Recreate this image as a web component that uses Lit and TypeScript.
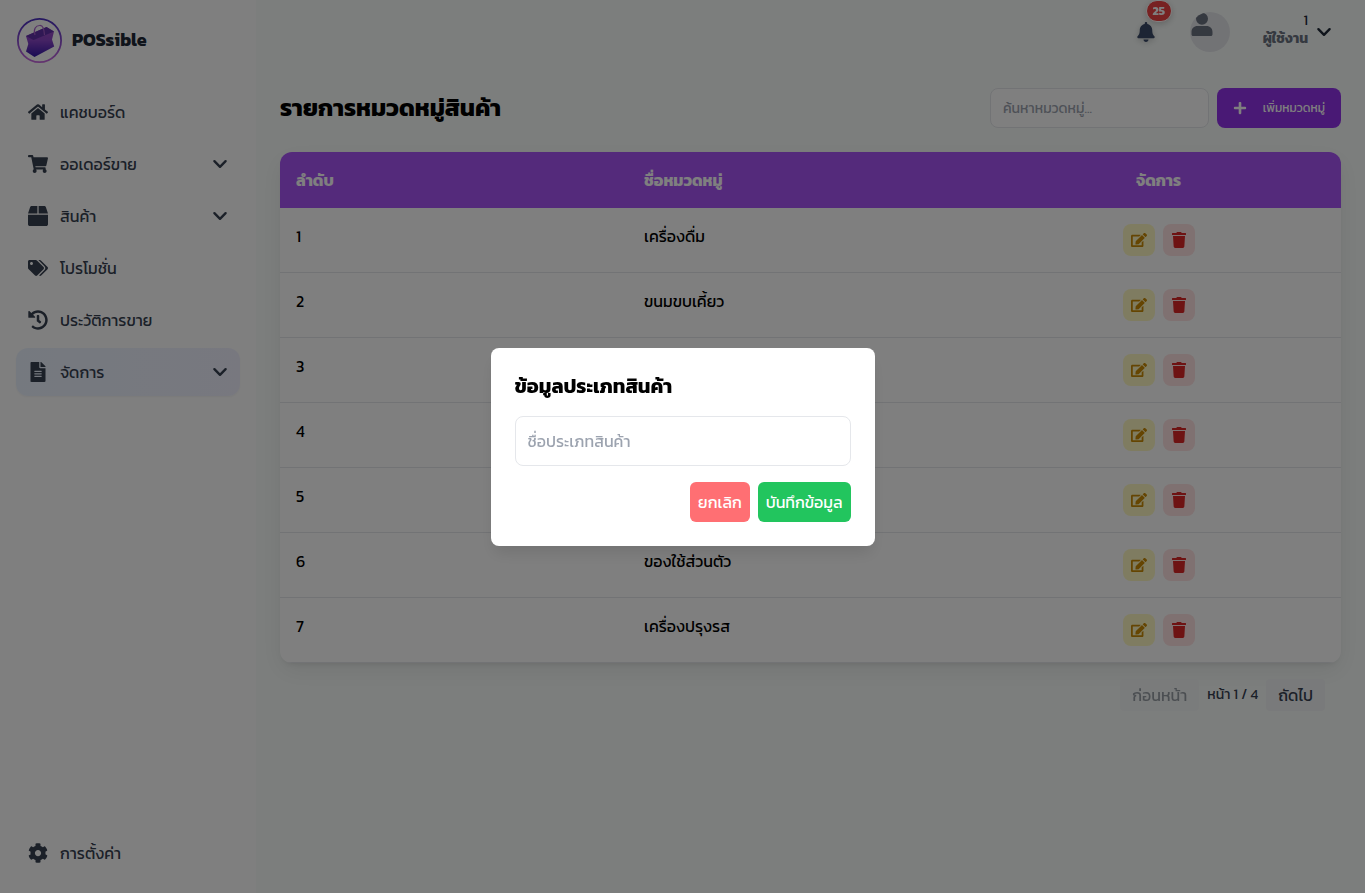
import { LitElement, html, css, svg } from "lit";
import { customElement, property } from "lit/decorators.js";

interface Glyph {
  box: string;
  d: string;
}

const glyphs: Record<string, Glyph> = {
  home: {
    box: "0 0 576 512",
    d: "M280.37 148.26L96 300.11V464a16 16 0 0 0 16 16l112.06-.29a16 16 0 0 0 15.92-16V368a16 16 0 0 1 16-16h64a16 16 0 0 1 16 16v95.64a16 16 0 0 0 16 16.05L464 480a16 16 0 0 0 16-16V300L295.67 148.26a12.19 12.19 0 0 0-15.3 0zM571.6 251.47L488 182.56V44.05a12 12 0 0 0-12-12h-56a12 12 0 0 0-12 12v72.61L318.47 43a48 48 0 0 0-61 0L4.34 251.47a12 12 0 0 0-1.6 16.9l25.5 31A12 12 0 0 0 45.15 301l235.22-193.74a12.19 12.19 0 0 1 15.3 0L530.9 301a12 12 0 0 0 16.9-1.6l25.5-31a12 12 0 0 0-1.7-16.93z",
  },
  cart: {
    box: "0 0 576 512",
    d: "M528.12 301.319l47.273-208C578.806 78.301 567.391 64 551.99 64H159.208l-9.166-44.81C147.758 8.021 137.93 0 126.529 0H24C10.745 0 0 10.745 0 24v16c0 13.255 10.745 24 24 24h69.883l70.248 343.435C147.325 417.1 136 435.222 136 456c0 30.928 25.072 56 56 56s56-25.072 56-56c0-15.674-6.447-29.835-16.824-40h209.647C430.447 426.165 424 440.326 424 456c0 30.928 25.072 56 56 56s56-25.072 56-56c0-22.172-12.888-41.332-31.579-50.405l5.517-24.276c3.413-15.018-8.002-29.319-23.403-29.319H218.117l-6.545-32h293.145c11.206 0 20.92-7.754 23.403-18.681z",
  },
  box: {
    box: "0 0 512 512",
    d: "M509.5 184.6L458.9 32.8C452.4 13.2 434.1 0 413.4 0H272v192h238.7c-.4-2.5-.4-5-1.2-7.4zM240 0H98.6c-20.7 0-39 13.2-45.5 32.8L2.5 184.6c-.8 2.4-.8 4.9-1.2 7.4H240V0zM0 224v240c0 26.5 21.5 48 48 48h416c26.5 0 48-21.5 48-48V224H0z",
  },
  tags: {
    box: "0 0 640 512",
    d: "M497.941 225.941L286.059 14.059A48 48 0 0 0 252.118 0H48C21.49 0 0 21.49 0 48v204.118a48 48 0 0 0 14.059 33.941l211.882 211.882c18.744 18.745 49.136 18.746 67.882 0l204.118-204.118c18.745-18.745 18.745-49.137 0-67.882zM112 160c-26.51 0-48-21.49-48-48s21.49-48 48-48 48 21.49 48 48-21.49 48-48 48zm513.941 133.823L421.823 497.941c-18.745 18.745-49.137 18.745-67.882 0l-.36-.36L527.64 323.522c16.999-16.999 26.362-39.6 26.362-63.64s-9.362-46.641-26.362-63.64L331.397 0h48.721a48 48 0 0 1 33.941 14.059l211.882 211.882c18.745 18.745 18.745 49.137 0 67.882z",
  },
  history: {
    box: "0 0 512 512",
    d: "M504 255.531c.253 136.64-111.18 248.372-247.82 248.468-59.015.042-113.223-20.53-155.822-54.911-11.077-8.94-11.905-25.541-1.839-35.607l11.267-11.267c8.609-8.609 22.353-9.551 31.891-1.984C173.062 425.135 212.781 440 256 440c101.705 0 184-82.311 184-184 0-101.705-82.311-184-184-184-48.814 0-93.149 18.969-126.068 49.932l50.754 50.754c10.08 10.08 2.941 27.314-11.313 27.314H24c-8.837 0-16-7.163-16-16V38.627c0-14.254 17.234-21.393 27.314-11.314l49.372 49.372C129.209 34.136 189.552 8 256 8c136.81 0 247.747 110.78 248 247.531zm-180.912 78.784l9.823-12.63c8.138-10.463 6.253-25.542-4.21-33.679L288 256.349V152c0-13.255-10.745-24-24-24h-16c-13.255 0-24 10.745-24 24v135.651l65.409 50.874c10.463 8.137 25.541 6.253 33.679-4.21z",
  },
  file: {
    box: "0 0 384 512",
    d: "M224 136V0H24C10.7 0 0 10.7 0 24v464c0 13.3 10.7 24 24 24h336c13.3 0 24-10.7 24-24V160H248c-13.2 0-24-10.8-24-24zm64 236c0 6.6-5.4 12-12 12H108c-6.6 0-12-5.4-12-12v-8c0-6.6 5.4-12 12-12h168c6.6 0 12 5.4 12 12v8zm0-64c0 6.6-5.4 12-12 12H108c-6.6 0-12-5.4-12-12v-8c0-6.6 5.4-12 12-12h168c6.6 0 12 5.4 12 12v8zm0-72v8c0 6.6-5.4 12-12 12H108c-6.6 0-12-5.4-12-12v-8c0-6.6 5.4-12 12-12h168c6.6 0 12 5.4 12 12zm96-114.1v6.1H256V0h6.1c6.4 0 12.5 2.5 17 7l97.9 98c4.5 4.5 7 10.6 7 16.9z",
  },
  cog: {
    box: "0 0 512 512",
    d: "M487.4 315.7l-42.6-24.6c4.3-23.2 4.3-47 0-70.2l42.6-24.6c4.9-2.8 7.1-8.6 5.5-14-11.1-35.6-30-67.8-54.7-94.6-3.8-4.1-10-5.1-14.8-2.3L380.8 110c-17.9-15.4-38.5-27.3-60.8-35.1V25.8c0-5.6-3.9-10.5-9.4-11.7-36.7-8.2-74.3-7.8-109.2 0-5.5 1.2-9.4 6.1-9.4 11.7V75c-22.2 7.9-42.8 19.8-60.8 35.1L88.7 85.5c-4.9-2.8-11-1.9-14.8 2.3-24.7 26.7-43.6 58.9-54.7 94.6-1.7 5.4.6 11.2 5.5 14L67.3 221c-4.3 23.2-4.3 47 0 70.2l-42.6 24.6c-4.9 2.8-7.1 8.6-5.5 14 11.1 35.6 30 67.8 54.7 94.6 3.8 4.1 10 5.1 14.8 2.3l42.6-24.6c17.9 15.4 38.5 27.3 60.8 35.1v49.2c0 5.6 3.9 10.5 9.4 11.7 36.7 8.2 74.3 7.8 109.2 0 5.5-1.2 9.4-6.1 9.4-11.7v-49.2c22.2-7.9 42.8-19.8 60.8-35.1l42.6 24.6c4.9 2.8 11 1.9 14.8-2.3 24.7-26.7 43.6-58.9 54.7-94.6 1.5-5.5-.7-11.3-5.6-14.1zM256 336c-44.1 0-80-35.9-80-80s35.9-80 80-80 80 35.9 80 80-35.9 80-80 80z",
  },
  edit: {
    box: "0 0 576 512",
    d: "M402.6 83.2l90.2 90.2c3.8 3.8 3.8 10 0 13.8L274.4 405.6l-92.8 10.3c-12.4 1.4-22.9-9.1-21.5-21.5l10.3-92.8L388.8 83.2c3.8-3.8 10-3.8 13.8 0zm162-22.9l-48.8-48.8c-15.2-15.2-39.9-15.2-55.2 0l-35.4 35.4c-3.8 3.8-3.8 10 0 13.8l90.2 90.2c3.8 3.8 10 3.8 13.8 0l35.4-35.4c15.2-15.3 15.2-40 0-55.2zM384 346.2V448H64V128h229.8c3.2 0 6.2-1.3 8.5-3.5l40-40c7.6-7.6 2.2-20.5-8.5-20.5H48C21.5 64 0 85.5 0 112v352c0 26.5 21.5 48 48 48h352c26.5 0 48-21.5 48-48V306.2c0-10.7-12.9-16-20.5-8.5l-40 40c-2.2 2.3-3.5 5.3-3.5 8.5z",
  },
  trash: {
    box: "0 0 448 512",
    d: "M432 32H312l-9.4-18.7A24 24 0 0 0 281.1 0H166.8a23.72 23.72 0 0 0-21.4 13.3L136 32H16A16 16 0 0 0 0 48v32a16 16 0 0 0 16 16h416a16 16 0 0 0 16-16V48a16 16 0 0 0-16-16zM53.2 467a48 48 0 0 0 47.9 45h245.8a48 48 0 0 0 47.9-45L416 128H32z",
  },
  plus: {
    box: "0 0 448 512",
    d: "M416 208H272V64c0-17.67-14.33-32-32-32h-32c-17.67 0-32 14.33-32 32v144H32c-17.67 0-32 14.33-32 32v32c0 17.67 14.33 32 32 32h144v144c0 17.67 14.33 32 32 32h32c17.67 0 32-14.33 32-32V304h144c17.67 0 32-14.33 32-32v-32c0-17.67-14.33-32-32-32z",
  },
  bell: {
    box: "0 0 448 512",
    d: "M224 512c35.32 0 63.97-28.65 63.97-64H160.03c0 35.35 28.65 64 63.97 64zm215.39-149.71c-19.32-20.76-55.47-51.99-55.47-154.29 0-77.7-54.48-139.9-127.94-155.16V32c0-17.67-14.32-32-31.98-32s-31.98 14.33-31.98 32v20.84C118.56 68.1 64.08 130.3 64.08 208c0 102.3-36.15 133.53-55.47 154.29-6 6.45-8.66 14.16-8.61 21.71.11 16.4 12.98 32 32.1 32h383.8c19.12 0 32-15.6 32.1-32 .05-7.55-2.61-15.27-8.61-21.71z",
  },
  user: {
    box: "0 0 24 24",
    d: "M12 .8a6 6 0 1 1 0 12 6 6 0 0 1 0-12zM7.5 14h9c3.600 0 6 2.400 6 6v2.200c0 1.200-.6 1.800-1.800 1.800H3.300c-1.200 0-1.800-.6-1.800-1.800V20c0-3.600 2.400-6 6-6z",
  },
};

@customElement("app-icon")
export class AppIcon extends LitElement {
  @property() name = "home";
  @property({ type: Number }) size = 20;

  static styles = css`
    :host { display: inline-flex; flex: none; }
    svg { display: block; fill: currentColor; }
    .line { fill: none; stroke: currentColor; stroke-width: 2.4; stroke-linecap: round; stroke-linejoin: round; }
  `;

  render() {
    const glyph = glyphs[this.name];
    return html`<svg width=${this.size} height=${this.size} viewBox=${glyph ? glyph.box : "0 0 16 16"} aria-hidden="true">
      ${glyph ? svg`<path d=${glyph.d}></path>` : svg`<path class="line" d="M2.400 5.200L8 10.800L13.600 5.200"></path>`}
    </svg>`;
  }
}

const menu = [
  { icon: "home", label: "แคชบอร์ด", sub: false, active: false },
  { icon: "cart", label: "ออเดอร์ขาย", sub: true, active: false },
  { icon: "box", label: "สินค้า", sub: true, active: false },
  { icon: "tags", label: "โปรโมชั่น", sub: false, active: false },
  { icon: "history", label: "ประวัติการขาย", sub: false, active: false },
  { icon: "file", label: "จัดการ", sub: true, active: true },
];

const categories = [
  "เครื่องดื่ม",
  "ขนมขบเคี้ยว",
  "อาหารแห้ง",
  "อาหารสด",
  "ของใช้",
  "ของใช้ส่วนตัว",
  "เครื่องปรุงรส",
];

@customElement("app-root")
export class AppRoot extends LitElement {
  static styles = css`
    :host { display: block; font-family: Kanit, "Noto Sans Thai", "Noto Sans", sans-serif; font-size: 16px; line-height: 24px; color: #000; }
    * { box-sizing: border-box; }
    button, input { font: inherit; margin: 0; }
    button { border: 0; cursor: pointer; white-space: nowrap; }
    h1, h2 { margin: 0; }
    a { color: inherit; text-decoration: none; }
    .page { display: flex; min-height: 100vh; background: #f9fdfb; }

    .side { width: 256px; flex: none; display: flex; flex-direction: column; background: #fff; padding: 16px; }
    .brand { display: flex; align-items: center; gap: 8px; height: 48px; font-size: 18px; font-weight: 700; color: #1f2937; }
    .brand svg { width: 48px; height: 48px; flex: none; }
    .menu { display: flex; flex-direction: column; gap: 4px; margin-top: 24px; flex: 1; }
    .item { display: flex; align-items: center; gap: 12px; height: 48px; padding: 0 12px; border-radius: 12px; color: #374151; }
    .item span { flex: 1; }
    .item.active { background: linear-gradient(90deg, #ebf3fe, #f0f1ff); box-shadow: 0 1px 2px rgba(0, 0, 0, 0.05); }

    .body { flex: 1; min-width: 0; display: flex; flex-direction: column; }
    .top { display: flex; justify-content: flex-end; align-items: center; height: 64px; padding: 0 33px; }
    .bell { position: relative; display: flex; padding: 0; background: none; color: #3b4a68; filter: drop-shadow(0 2px 3px rgba(0, 0, 0, 0.2)); }
    .count { position: absolute; left: 10px; top: -22px; min-width: 26px; height: 22px; border-radius: 11px; border: 1px solid #fff; background: #ef4444; color: #fff; font-size: 12px; line-height: 20px; font-weight: 700; text-align: center; }
    .avatar { width: 40px; height: 40px; margin-left: 34px; border-radius: 50%; overflow: hidden; background: #e5e7eb; color: #6b7280; }
    .user { display: flex; align-items: center; gap: 8px; margin-left: 33px; padding: 0; background: none; font-size: 14px; line-height: 18px; text-align: right; color: #1f2937; }
    .user span { padding-bottom: 4px; }
    .user b { display: block; color: #6b7280; }

    main { padding: 24px; }
    .head { display: flex; align-items: center; justify-content: space-between; margin-bottom: 24px; }
    h1 { font-size: 24px; line-height: 32px; font-weight: 700; }
    .tools { display: flex; gap: 8px; }
    .search { width: 219px; height: 40px; padding: 0 12px; border: 1px solid #e5e7eb; border-radius: 8px; background: #fff; font-size: 14px; }
    ::placeholder { color: #9ca3af; opacity: 1; }
    .add { display: flex; align-items: center; justify-content: space-between; width: 124px; height: 40px; padding: 0 16px; border-radius: 8px; background: #9333ea; color: #fff; font-size: 12px; }
    .card { border-radius: 12px; overflow: hidden; background: #fff; box-shadow: 0 8px 24px rgba(0, 0, 0, 0.07), 0 4px 6px -4px rgba(0, 0, 0, 0.12); }
    table { width: 100%; border-collapse: collapse; table-layout: fixed; }
    th, td { padding: 16px; text-align: left; vertical-align: top; }
    th { height: 56px; background: #a855f7; color: #fff; font-weight: 700; }
    th:last-child { text-align: center; }
    td { border-bottom: 1px solid #e5e7eb; }
    .c1, .c2 { width: 32.8%; }
    .acts { display: flex; justify-content: center; gap: 8px; }
    .acts button { display: flex; align-items: center; justify-content: center; width: 32px; height: 32px; padding: 0; border-radius: 8px; }
    .edit { background: #fef9c3; color: #ca8a04; }
    .del { background: #fee2e2; color: #dc2626; }
    .pager { display: flex; justify-content: flex-end; align-items: center; gap: 8px; padding: 0 16px; margin-top: 16px; font-size: 14px; color: #374151; }
    .pager button { height: 32px; padding: 0 12px; border-radius: 4px; background: #f3f4f6; color: #374151; font-size: 16px; }
    .pager button:disabled { opacity: 0.5; }

    .shade { position: fixed; inset: 0; display: flex; align-items: center; justify-content: center; background: rgba(0, 0, 0, 0.5); }
    .modal { width: 384px; padding: 24px; border-radius: 8px; background: #fff; box-shadow: 0 10px 15px -3px rgba(0, 0, 0, 0.1); }
    h2 { font-size: 20px; line-height: 28px; font-weight: 700; margin-bottom: 16px; }
    .name { display: block; width: 100%; height: 50px; padding: 0 12px; border: 1px solid #e5e7eb; border-radius: 8px; background: #fff; }
    .buttons { display: flex; justify-content: flex-end; gap: 8px; margin-top: 16px; }
    .buttons button { height: 40px; padding: 0 8px; border-radius: 6px; color: #fff; }
    .buttons .cancel { background: #ff6f73; }
    .buttons .save { background: #22c55e; }
  `;

  private entry(m: { icon: string; label: string; sub: boolean; active: boolean }) {
    return html`<a class="item ${m.active ? "active" : ""}" href="#">
      <app-icon name=${m.icon}></app-icon><span>${m.label}</span>
      ${m.sub ? html`<app-icon name="down" size="16"></app-icon>` : ""}
    </a>`;
  }

  render() {
    return html`
      <div class="page">
        <aside class="side">
          <div class="brand">
            <svg viewBox="0 0 48 48" aria-hidden="true">
              <defs>
                <linearGradient id="ring" x1="0" y1="0" x2="0" y2="1"><stop offset="0" stop-color="#4a2fc0"></stop><stop offset="1" stop-color="#c86adf"></stop></linearGradient>
                <linearGradient id="bag" x1="0" y1="0" x2="0" y2="1"><stop offset="0" stop-color="#a04cc4"></stop><stop offset=".45" stop-color="#8a46c8"></stop><stop offset="1" stop-color="#3216a8"></stop></linearGradient>
              </defs>
              <circle cx="23.500" cy="24.500" r="21.600" fill="none" stroke="url(#ring)" stroke-width="1.800"></circle>
              <path d="M10 20L30.500 11L38 15.500L36 23.500L38.200 30.500L18.500 41L10 35.500L12.300 28z" fill="url(#bag)"></path>
              <path d="M10 20L30.500 11L38 15.500L17.500 24z" fill="#6030a8"></path>
              <path d="M19 19C17 13 20 9.500 23.500 9.500C27 9 28 13 28.500 19" fill="none" stroke="#a85fcb" stroke-width="1.200"></path>
            </svg>
            POSsible
          </div>
          <nav class="menu">${menu.map((m) => this.entry(m))}</nav>
          <div>${this.entry({ icon: "cog", label: "การตั้งค่า", sub: false, active: false })}</div>
        </aside>
        <div class="body">
          <header class="top">
            <button class="bell" aria-label="การแจ้งเตือน"><app-icon name="bell"></app-icon><span class="count">25</span></button>
            <div class="avatar"><app-icon name="user" size="24"></app-icon></div>
            <button class="user"><span>1<b>ผู้ใช้งาน</b></span><app-icon name="down" size="16"></app-icon></button>
          </header>
          <main>
            <div class="head">
              <h1>รายการหมวดหมู่สินค้า</h1>
              <div class="tools">
                <input class="search" type="text" aria-label="ค้นหาหมวดหมู่" placeholder="ค้นหาหมวดหมู่..." />
                <button class="add"><app-icon name="plus" size="14"></app-icon>เพิ่มหมวดหมู่</button>
              </div>
            </div>
            <div class="card">
              <table>
                <thead><tr><th class="c1">ลำดับ</th><th class="c2">ชื่อหมวดหมู่</th><th>จัดการ</th></tr></thead>
                <tbody>
                  ${categories.map((c, i) => html`<tr><td>${i + 1}</td><td>${c}</td><td><div class="acts">
                    <button class="edit" aria-label="แก้ไข"><app-icon name="edit" size="16"></app-icon></button>
                    <button class="del" aria-label="ลบ"><app-icon name="trash" size="16"></app-icon></button>
                  </div></td></tr>`)}
                </tbody>
              </table>
            </div>
            <div class="pager"><button disabled>ก่อนหน้า</button><span>หน้า 1 / 4</span><button>ถัดไป</button></div>
          </main>
        </div>
      </div>
      <div class="shade">
        <div class="modal" role="dialog" aria-modal="true" aria-labelledby="title">
          <h2 id="title">ข้อมูลประเภทสินค้า</h2>
          <input class="name" type="text" aria-label="ชื่อประเภทสินค้า" placeholder="ชื่อประเภทสินค้า" />
          <div class="buttons"><button class="cancel">ยกเลิก</button><button class="save">บันทึกข้อมูล</button></div>
        </div>
      </div>
    `;
  }
}
